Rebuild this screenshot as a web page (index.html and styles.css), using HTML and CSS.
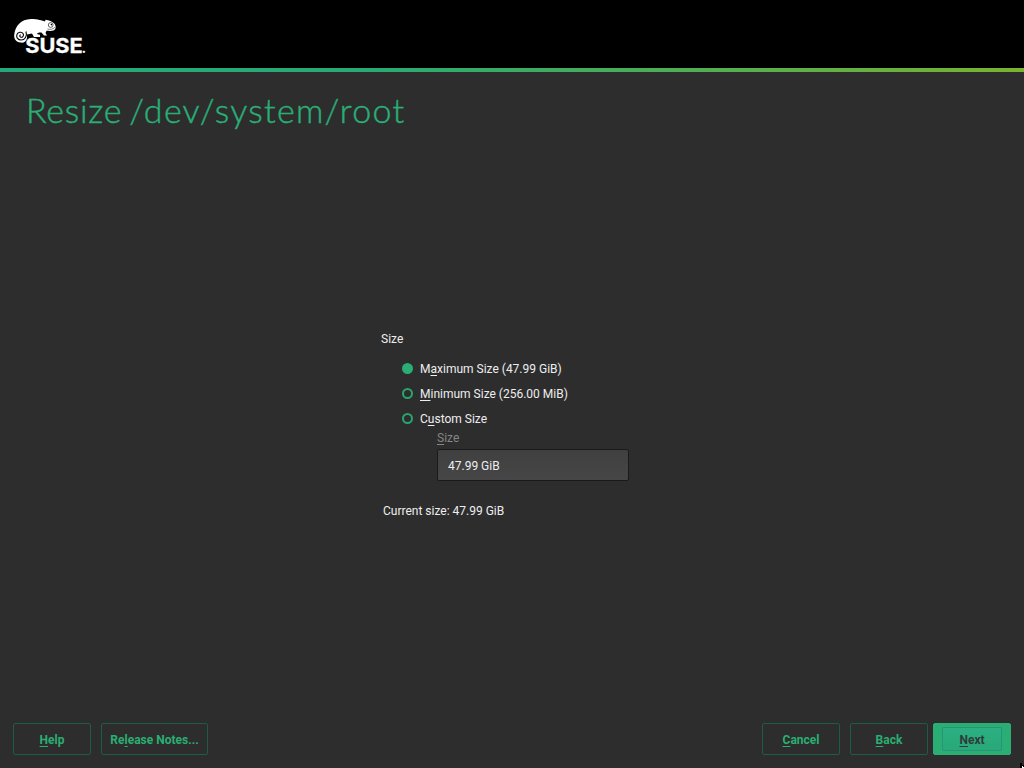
FILE: index.html
```html
<!DOCTYPE html>
<html lang="en">
<head>
<meta charset="utf-8">
<title>Resize /dev/system/root</title>
<link rel="stylesheet" href="styles.css">
</head>
<body>
<div class="installer">
  <header class="banner">
    <svg class="logo" width="76" height="40" viewBox="0 0 76 40" role="img" aria-label="SUSE">
      <path class="chameleon" d="M1.2 18C2 9 8 2.2 18 2C25 2 29 3.5 32 4.5L32.5 2.8C36 3.3 40.5 5 42 7.5C43 10 43 12 41 13.2C39 14.2 36 13.8 33.5 13.8L32.5 16L34 18.5H31L28.5 15.5C26 15.3 24 16 23.8 17L27 17.8V20H21L19 16.5L14 17.5V21C13.5 24.5 10.5 26.2 7.5 25.6C3 25 .8 22 1.2 18Z"/>
      <path class="tail" d="M13 14.5C14.3 19 12 23 8.2 23C4.8 23 3.2 20.4 3.8 17.8C4.5 15 8.8 14.3 10.2 16.8C11.2 19 9.2 20.8 7.5 20C6.4 19.4 6.6 18 7.7 17.8"/>
      <circle class="eye" cx="37.7" cy="8" r="2.4"/>
      <circle class="pupil" cx="38.4" cy="7.6" r=".8"/>
      <path class="mouth" d="M34.5 12C37 12.8 40 12.3 42 10.3"/>
      <text class="wordmark" x="12.2" y="35.8" textLength="57.5" lengthAdjust="spacingAndGlyphs">SUSE</text>
      <text class="wordmark-dot" x="68.6" y="35.8">.</text>
    </svg>
  </header>
  <h1 class="title">Resize <span class="device">/dev/system/root</span></h1>
  <main class="content">
    <div class="group-label">Size</div>
    <div class="options">
      <label class="option"><span class="radio radio-on"></span><span>M<u>a</u>ximum Size (47.99 GiB)</span></label>
      <label class="option"><span class="radio"></span><span><u>M</u>inimum Size (256.00 MiB)</span></label>
      <label class="option"><span class="radio"></span><span>C<u>u</u>stom Size</span></label>
    </div>
    <div class="custom">
      <div class="custom-label"><u>S</u>ize</div>
      <div class="field">47.99 GiB</div>
    </div>
    <div class="current">Current size: 47.99 GiB</div>
  </main>
  <footer class="actions">
    <button class="button"><span><u>H</u>elp</span></button>
    <button class="button button-wide"><span>Re<u>l</u>ease Notes...</span></button>
    <span class="spacer"></span>
    <button class="button"><span><u>C</u>ancel</span></button>
    <button class="button button-back"><span><u>B</u>ack</span></button>
    <button class="button button-next"><span class="focus-ring"><span><u>N</u>ext</span></span></button>
  </footer>
  <svg class="pointer" width="4" height="5" viewBox="0 0 4 5"><path d="M0 0H2V2H4V5H0Z" fill="#000"/><path d="M2 3H3V4H4V5H2Z" fill="#fff"/></svg>
</div>
</body>
</html>
```

FILE: styles.css
```css
* { box-sizing: border-box; }
body { margin: 0; background: #2d2d2d; color: #eee; font: 12px/16px Roboto, sans-serif; }
u { text-decoration: underline; text-decoration-thickness: 1px; text-underline-offset: 2px; text-decoration-skip-ink: none; }
.installer { position: relative; display: flex; flex-direction: column; width: 1024px; height: 768px; overflow: hidden; }
.banner { flex: none; height: 72px; padding: 17px 0 0 13px; background: linear-gradient(90deg, #25a97a 0%, #27aa75 35%, #79b330 100%) 0 68px / 100% 4px no-repeat #000; }
.logo { display: block; }
.chameleon { fill: #fff; }
.tail { fill: none; stroke: #000; stroke-width: 1.1; }
.eye { fill: #fff; stroke: #000; stroke-width: .6; }
.pupil { fill: #000; }
.mouth { fill: none; stroke: #000; stroke-width: .5; }
.wordmark { fill: #fff; stroke: #fff; stroke-width: .3; font: 700 20.5px Inter, sans-serif; }
.wordmark-dot { fill: #fff; font: 700 14px Inter, sans-serif; }
.title { flex: none; height: 50px; margin: 13px 0 0 26px; color: #2aae75; font: 300 34px/50px Lato, sans-serif; letter-spacing: .75px; word-spacing: -3px; -webkit-text-stroke: .45px #2aae75; white-space: nowrap; }
.device { letter-spacing: 1.3px; }
.content { flex: 1; padding: 196px 0 0 381px; }
.options { display: flex; flex-direction: column; gap: 9px; padding: 14px 0 0 21px; }
.option { display: flex; align-items: flex-start; gap: 7px; height: 16px; }
.radio { width: 11px; height: 11px; margin-top: 2px; border: 2px solid #2aa56f; border-radius: 50%; }
.radio-on { background: #2aae73; border-color: #2aae73; }
.custom { width: 248px; padding: 3px 0 0 56px; }
.custom-label { color: #858585; }
.field { width: 192px; height: 32px; margin-top: 3px; padding: 0 10px; border: 1px solid #1a1a1a; border-radius: 2px; background: linear-gradient(#404040, #464646); line-height: 32px; }
.current { padding: 22px 0 0 2px; }
.actions { flex: none; display: flex; height: 45px; padding: 0 13px; }
.button { width: 78px; height: 32px; padding: 2px 0 0; border: 1px solid #1c5d45; border-radius: 2px; background: transparent; color: #2aae73; font: 700 12px/16px Roboto, sans-serif; }
.button-wide { width: 107px; margin-left: 10px; }
.button-back { margin-left: 10px; }
.button-next { width: 78px; margin-left: 5px; padding: 0; border-color: #2aae73; background: #2aae73; color: #303b3b; }
.focus-ring { display: flex; align-items: center; justify-content: center; width: 60px; height: 24px; margin: 0 auto; padding-top: 2px; border: 1px solid #289477; border-radius: 1px; background: linear-gradient(#2bb082, #29a879); }
.spacer { flex: 1; }
.pointer { position: absolute; right: 0; bottom: 0; }
```
